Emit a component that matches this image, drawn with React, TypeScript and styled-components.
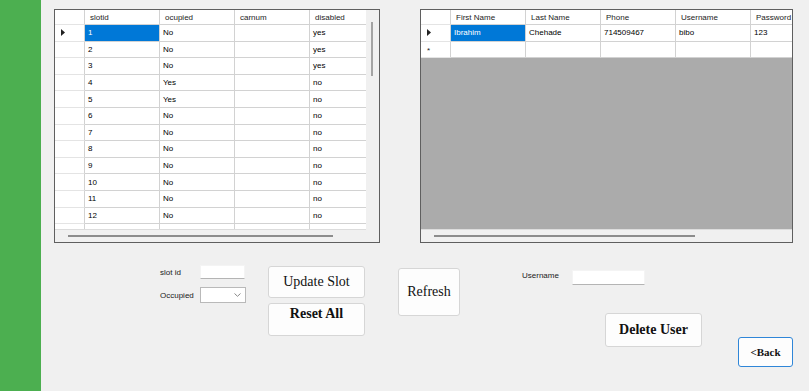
import React from "react";
import styled, { createGlobalStyle } from "styled-components";

const GlobalStyle = createGlobalStyle`
  body {
    margin: 0;
    background: #f0f0f0;
    font-family: "Liberation Sans", Arial, sans-serif;
  }
`;

const Page = styled.div`
  display: flex;
  width: 809px;
  height: 391px;
  background: #f0f0f0;
  overflow: hidden;
`;

const SideBar = styled.div`
  flex: none;
  width: 41px;
  background: #4caf50;
`;

const Main = styled.div`
  flex: 1;
  display: flex;
  flex-direction: column;
  padding-top: 9px;
`;

const GridRow = styled.div`
  display: flex;
  gap: 40px;
  padding-left: 13px;
  height: 234px;
`;

const GridFrame = styled.div<{ $width: number; $vscroll: boolean }>`
  width: ${({ $width }) => $width}px;
  height: 234px;
  box-sizing: border-box;
  border: 1px solid #5f5f5f;
  background: #f0f0f0;
  display: grid;
  grid-template-columns: ${({ $vscroll }) => ($vscroll ? "1fr 13px" : "1fr")};
  grid-template-rows: 1fr 13px;
`;

const CellArea = styled.div<{ $empty: string }>`
  overflow: hidden;
  background: ${({ $empty }) => $empty};
  min-width: 0;
`;

const Row = styled.div<{ $header?: boolean }>`
  display: flex;
  height: ${({ $header }) => ($header ? "15px" : "16.6px")};
  background: #fff;
`;

const Cell = styled.div<{ $w: number; $selected?: boolean; $header?: boolean }>`
  flex: none;
  width: ${({ $w }) => $w}px;
  box-sizing: border-box;
  border-right: 1px solid #d2d2d2;
  border-bottom: 1px solid #d2d2d2;
  padding-left: ${({ $header }) => ($header ? "5px" : "3px")};
  display: flex;
  align-items: center;
  white-space: nowrap;
  overflow: hidden;
  font-size: 8px;
  color: ${({ $selected, $header }) =>
    $selected ? "#fff" : $header ? "#1c1c1c" : "#000"};
  background: ${({ $selected }) => ($selected ? "#0078d7" : "#fff")};
`;

const RowHead = styled.div`
  flex: none;
  width: 30px;
  box-sizing: border-box;
  border-right: 1px solid #d2d2d2;
  border-bottom: 1px solid #e4e4e4;
  display: flex;
  align-items: center;
  padding-left: 6px;
  background: #fff;
`;

const Star = styled.span`
  font-size: 8px;
  line-height: 1;
  color: #222;
  margin-top: 3px;
`;

const VScroll = styled.div`
  background: #f0f0f0;
  padding: 12px 0 0 5px;
`;

const VThumb = styled.div`
  width: 2px;
  height: 54px;
  background: #a3a3a3;
`;

const HScroll = styled.div<{ $left: number }>`
  background: #f0f0f0;
  border-top: 1px solid #dcdcdc;
  padding: 5px 0 0 ${({ $left }) => $left}px;
`;

const HThumb = styled.div<{ $w: number }>`
  width: ${({ $w }) => $w}px;
  height: 2px;
  background: #8c8c8c;
`;

const Corner = styled.div`
  background: #f0f0f0;
`;

const BottomRow = styled.div`
  display: flex;
  align-items: flex-start;
  padding-left: 119px;
`;

const FieldGrid = styled.div`
  display: grid;
  grid-template-columns: 40px 46px;
  row-gap: 8px;
  align-items: center;
  margin-top: 22px;
`;

const Label = styled.span`
  font-size: 8px;
  color: #1a1a1a;
  white-space: nowrap;
`;

const TextBox = styled.div<{ $w: number; $h: number }>`
  width: ${({ $w }) => $w}px;
  height: ${({ $h }) => $h}px;
  box-sizing: border-box;
  background: #fff;
  border: 1px solid #f4f4f4;
  border-bottom-color: #b4b4b4;
`;

const Combo = styled.div`
  width: 46px;
  height: 16px;
  box-sizing: border-box;
  background: #fff;
  border: 1px solid #b9b9b9;
  display: flex;
  align-items: center;
  justify-content: flex-end;
  padding-right: 4px;
`;

const ButtonStack = styled.div`
  display: flex;
  flex-direction: column;
  gap: 5px;
  margin: 23px 0 0 22px;
`;

const FormButton = styled.button<{
  $w: number;
  $h: number;
  $bold?: boolean;
  $size?: number;
  $top?: boolean;
  $focused?: boolean;
}>`
  width: ${({ $w }) => $w}px;
  height: ${({ $h }) => $h}px;
  box-sizing: border-box;
  padding: ${({ $top }) => ($top ? "3px 0 0" : "0")};
  display: flex;
  justify-content: center;
  align-items: ${({ $top }) => ($top ? "flex-start" : "center")};
  background: #fdfdfd;
  border: 1px solid ${({ $focused }) => ($focused ? "#2f86d8" : "#d6d6d6")};
  border-radius: 3px;
  font-family: "Liberation Serif", "Times New Roman", serif;
  font-size: ${({ $size }) => $size ?? 14}px;
  font-weight: ${({ $bold }) => ($bold ? 700 : 400)};
  color: #111;
  line-height: 14px;
`;

const RefreshWrap = styled.div`
  margin: 25px 0 0 33px;
`;

const UserCol = styled.div`
  display: flex;
  flex-direction: column;
  margin: 27px 0 0 62px;
`;

const UserRow = styled.div`
  display: flex;
  align-items: center;
  gap: 0;
`;

const UserLabel = styled(Label)`
  width: 50px;
  margin-top: -5px;
`;

const DeleteWrap = styled.div`
  margin: 28px 0 0 83px;
`;

const BackWrap = styled.div`
  margin: 94px 0 0 36px;
`;

type Column = { name: string; width: number };

interface GridProps {
  width: number;
  columns: Column[];
  rows: string[][];
  vscroll: boolean;
  newRow?: boolean;
  empty: string;
  thumbLeft: number;
  thumbWidth: number;
}

const Arrow = () => (
  <svg width="4" height="7" viewBox="0 0 4 7">
    <path d="M0 0 L4 3.5 L0 7 Z" fill="#222" />
  </svg>
);

const DataGrid: React.FC<GridProps> = ({
  width,
  columns,
  rows,
  vscroll,
  newRow,
  empty,
  thumbLeft,
  thumbWidth,
}) => (
  <GridFrame $width={width} $vscroll={vscroll}>
    <CellArea $empty={empty}>
      <Row $header>
        <RowHead />
        {columns.map((c) => (
          <Cell key={c.name} $w={c.width} $header>
            {c.name}
          </Cell>
        ))}
      </Row>
      {rows.map((r, i) => (
        <Row key={i}>
          <RowHead>{i === 0 && <Arrow />}</RowHead>
          {columns.map((c, j) => (
            <Cell key={c.name} $w={c.width} $selected={i === 0 && j === 0}>
              {r[j]}
            </Cell>
          ))}
        </Row>
      ))}
      {newRow && (
        <Row>
          <RowHead>
            <Star>*</Star>
          </RowHead>
          {columns.map((c) => (
            <Cell key={c.name} $w={c.width} />
          ))}
        </Row>
      )}
    </CellArea>
    {vscroll && (
      <VScroll>
        <VThumb />
      </VScroll>
    )}
    <HScroll $left={thumbLeft}>
      <HThumb $w={thumbWidth} />
    </HScroll>
    {vscroll && <Corner />}
  </GridFrame>
);

const slotColumns: Column[] = [
  { name: "slotid", width: 75 },
  { name: "ocupied", width: 75 },
  { name: "carnum", width: 75 },
  { name: "disabled", width: 75 },
];

const slotRows = Array.from({ length: 13 }, (_, i) => {
  const id = i + 1;
  return [
    String(id),
    id === 4 || id === 5 ? "Yes" : "No",
    "",
    id <= 3 ? "yes" : "no",
  ];
});

const userColumns: Column[] = [
  { name: "First Name", width: 75 },
  { name: "Last Name", width: 75 },
  { name: "Phone", width: 75 },
  { name: "Username", width: 75 },
  { name: "Password", width: 75 },
];

const userRows = [["Ibrahim", "Chehade", "714509467", "bibo", "123"]];

const Chevron = () => (
  <svg width="7" height="4" viewBox="0 0 7 4">
    <path d="M0.5 0.5 L3.5 3.3 L6.5 0.5" fill="none" stroke="#8a8a8a" strokeWidth="1" />
  </svg>
);

export default function App() {
  return (
    <Page>
      <GlobalStyle />
      <SideBar />
      <Main>
        <GridRow>
          <DataGrid
            width={326}
            columns={slotColumns}
            rows={slotRows}
            vscroll
            empty="#fff"
            thumbLeft={13}
            thumbWidth={265}
          />
          <DataGrid
            width={373}
            columns={userColumns}
            rows={userRows}
            vscroll={false}
            newRow
            empty="#ababab"
            thumbLeft={13}
            thumbWidth={261}
          />
        </GridRow>
        <BottomRow>
          <FieldGrid>
            <Label>slot id</Label>
            <TextBox $w={45} $h={14} />
            <Label>Occupied</Label>
            <Combo>
              <Chevron />
            </Combo>
          </FieldGrid>
          <ButtonStack>
            <FormButton $w={97} $h={32}>
              Update Slot
            </FormButton>
            <FormButton $w={97} $h={33} $bold $top>
              Reset All
            </FormButton>
          </ButtonStack>
          <RefreshWrap>
            <FormButton $w={62} $h={48}>
              Refresh
            </FormButton>
          </RefreshWrap>
          <UserCol>
            <UserRow>
              <UserLabel>Username</UserLabel>
              <TextBox $w={73} $h={15} />
            </UserRow>
            <DeleteWrap>
              <FormButton $w={97} $h={34} $bold>
                Delete User
              </FormButton>
            </DeleteWrap>
          </UserCol>
          <BackWrap>
            <FormButton $w={55} $h={30} $bold $size={11} $focused>
              &lt;Back
            </FormButton>
          </BackWrap>
        </BottomRow>
      </Main>
    </Page>
  );
}
